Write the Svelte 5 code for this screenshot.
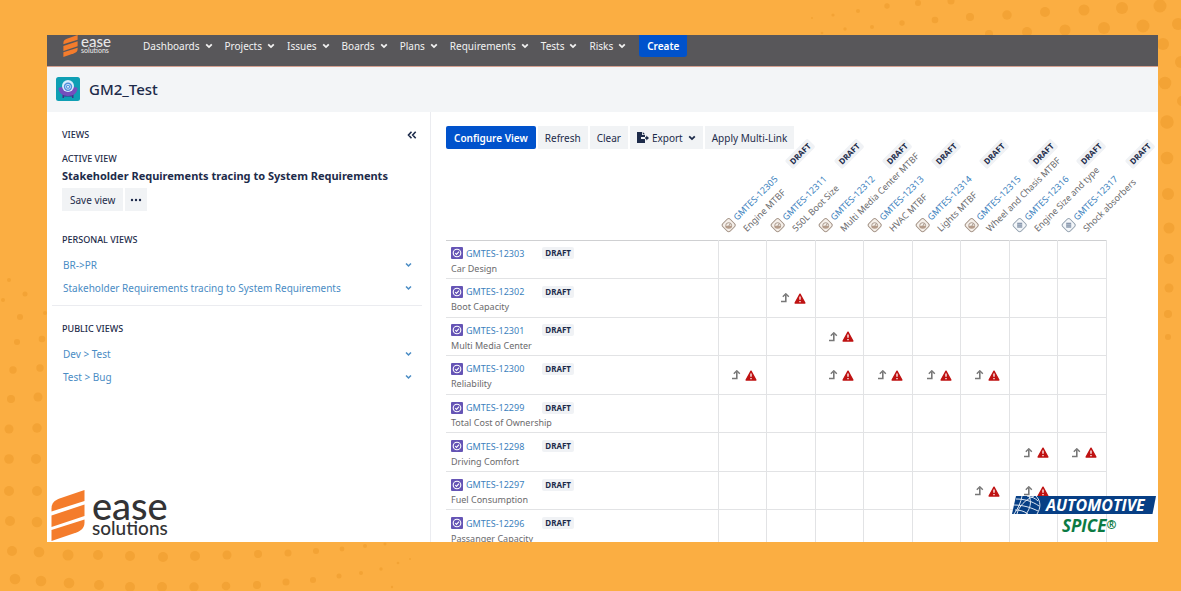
<script lang="ts">
  interface Requirement {
    key: string;
    name: string;
    kind?: 'metric' | 'spec';
    links?: number[];
  }

  const menu = ['Dashboards', 'Projects', 'Issues', 'Boards', 'Plans', 'Requirements', 'Tests', 'Risks'];

  const personalViews = ['BR->PR', 'Stakeholder Requirements tracing to System Requirements'];
  const publicViews = ['Dev > Test', 'Test > Bug'];

  const columns: Requirement[] = [
    { key: 'GMTES-12305', name: 'Engine MTBF', kind: 'metric' },
    { key: 'GMTES-12311', name: '550L Boot Size', kind: 'metric' },
    { key: 'GMTES-12312', name: 'Multi Media Center MTBF', kind: 'metric' },
    { key: 'GMTES-12313', name: 'HVAC MTBF', kind: 'metric' },
    { key: 'GMTES-12314', name: 'Lights MTBF', kind: 'metric' },
    { key: 'GMTES-12315', name: 'Wheel and Chasis MTBF', kind: 'metric' },
    { key: 'GMTES-12316', name: 'Engine Size and type', kind: 'spec' },
    { key: 'GMTES-12317', name: 'Shock absorbers', kind: 'spec' },
  ];

  // links holds the indexes of the linked columns
  const rows: Requirement[] = [
    { key: 'GMTES-12303', name: 'Car Design', links: [] },
    { key: 'GMTES-12302', name: 'Boot Capacity', links: [1] },
    { key: 'GMTES-12301', name: 'Multi Media Center', links: [2] },
    { key: 'GMTES-12300', name: 'Reliability', links: [0, 2, 3, 4, 5] },
    { key: 'GMTES-12299', name: 'Total Cost of Ownership', links: [] },
    { key: 'GMTES-12298', name: 'Driving Comfort', links: [6, 7] },
    { key: 'GMTES-12297', name: 'Fuel Consumption', links: [5, 6] },
    { key: 'GMTES-12296', name: 'Passanger Capacity', links: [] },
  ];

  // halftone dots: x, y, radius
  const topDots = [
    [1160, 6, 6.5], [1122, 8, 6], [1084, 10, 5.5], [1045, 12, 5], [1007, 15, 4.7], [970, 17, 4],
    [935, 20, 3.3], [902, 23, 2.7], [872, 27, 2], [845, 29, 1.7], [822, 33, 1.3], [1178, 24, 6],
    [1143, 26, 6.5], [1104, 28, 6], [1065, 30, 5.5], [1027, 32, 5], [989, 34, 4], [951, 1, 3.5],
    [918, 3, 3], [887, 6, 2.7], [858, 11, 2], [833, 15, 1.6], [812, 18, 1], [1163, 44, 6],
    [1181, 62, 6], [1165, 83, 6.3], [1182, 101, 5], [1167, 122, 6.7], [1167, 158, 6.3],
    [1168, 194, 6], [1169, 228, 5.5], [1169, 259, 5], [1169, 288, 4.5], [1168, 314, 4], [1168, 337, 3],
  ];
  const bottomDots = [
    [9, 280, 2], [25, 294, 2.5], [3, 300, 2], [20, 317, 3], [45, 313, 2], [17, 342, 3],
    [42, 339, 3.3], [13, 370, 3.7], [40, 368, 3.7], [11, 399, 4], [38, 397, 4.5], [9, 429, 4.5],
    [37, 428, 4.7], [9, 459, 4.8], [36, 459, 5], [9, 491, 5], [37, 491, 5], [10, 521, 5],
    [37, 522, 5.3], [12, 551, 5], [39, 552, 5.3], [15, 579, 5.3], [41, 581, 5.3], [68, 555, 5.5],
    [98, 555, 5], [130, 556, 5], [163, 557, 5], [195, 556, 5], [227, 555, 4.5], [258, 554, 4],
    [288, 553, 3.5], [316, 551, 3], [342, 549, 2.4], [365, 546, 2], [385, 544, 1.5], [69, 583, 5.3],
    [99, 585, 5], [130, 587, 5], [162, 587, 5], [194, 587, 4.7], [226, 586, 4.3], [257, 585, 4],
    [286, 582, 3.5], [313, 580, 3], [339, 576, 2.5], [361, 573, 2], [381, 569, 1.7], [398, 563, 1.3],
    [410, 559, 1], [392, 587, 1.2],
  ];
</script>

{#snippet chevron()}
  <svg class="chevron" viewBox="0 0 8 6" aria-hidden="true">
    <path d="M1.2 1.3 4 4.1l2.8-2.8" fill="none" stroke="currentColor" stroke-width="1.8" />
  </svg>
{/snippet}

{#snippet easeLogo()}
  <svg class="mark" viewBox="0 0 33 51" aria-hidden="true">
    <g fill="#f47c2c">
      <path d="M33 0v11L0 21.500v-3C0 13 3 10.500 8 8.500z" />
      <path d="M33 14.500v11.500L0 37V25.500z" />
      <path d="M33 29.500v3c0 5-3 8-8 10L0 51V40z" />
    </g>
  </svg>
  <span class="wordmark">
    <span class="ease">ease</span>
    <span class="solutions">solutions</span>
  </span>
{/snippet}

{#snippet kindIcon(kind: string | undefined)}
  {#if kind === 'metric'}
    <svg class="kind" viewBox="0 0 12 12" aria-hidden="true">
      <rect x=".7" y=".7" width="10.600" height="10.600" rx="2.500" fill="#f6f0ea" stroke="#a8988c" />
      <g transform="rotate(45 6 6)">
        <path d="M2.500 6.500h7a3.500 3 0 0 1-7 0z" fill="#b59c8a" />
        <path d="M3 6.500a3 3 0 0 1 6 0M6 7l1.500-2.500" fill="none" stroke="#a8988c" />
      </g>
    </svg>
  {:else if kind === 'spec'}
    <svg class="kind" viewBox="0 0 12 12" aria-hidden="true">
      <rect x=".7" y=".7" width="10.600" height="10.600" rx="2.500" fill="#f4f7fa" stroke="#9aa7b4" />
      <g transform="rotate(45 6 6)">
        <rect x="3.500" y="3.500" width="5" height="5" fill="#8796ab" />
        <path d="M3.500 5.200h5M3.500 6.900h5" stroke="#c8d1dc" stroke-width=".6" />
      </g>
    </svg>
  {:else}
    <svg class="kind" viewBox="0 0 12 12" aria-hidden="true">
      <rect width="12" height="12" rx="1" fill="#6554b5" />
      <circle cx="6" cy="6" r="3.800" fill="none" stroke="#fff" stroke-width="1.100" />
      <path d="m4.200 6 1.300 1.400L8 4.600" fill="none" stroke="#fff" stroke-width="1.100" />
    </svg>
  {/if}
{/snippet}

{#snippet requirement(item: Requirement)}
  <div class="requirement">
    <div class="key">
      {@render kindIcon(item.kind)}
      <a href="#{item.key}">{item.key}</a>
      <span class="status">DRAFT</span>
    </div>
    <div class="name">{item.name}</div>
  </div>
{/snippet}

{#snippet viewList(views: string[])}
  <ul class="views">
    {#each views as view}
      <li>
        <a href="#view">{view}</a>
        <button class="expand" aria-label="Options for {view}">{@render chevron()}</button>
      </li>
    {/each}
  </ul>
{/snippet}

<div class="page">
  <svg class="dots top" viewBox="781 0 400 350" aria-hidden="true">
    {#each topDots as [cx, cy, r]}
      <circle {cx} {cy} {r} />
    {/each}
  </svg>
  <svg class="dots bottom" viewBox="0 260 420 331" aria-hidden="true">
    {#each bottomDots as [cx, cy, r]}
      <circle {cx} {cy} {r} />
    {/each}
  </svg>

  <div class="app">
    <header class="topbar">
      <a class="logo small" href="#home" aria-label="ease solutions">{@render easeLogo()}</a>
      <nav>
        {#each menu as entry}
          <button class="menu-item">{entry}{@render chevron()}</button>
        {/each}
      </nav>
      <button class="create">Create</button>
    </header>

    <div class="project">
      <svg class="avatar" viewBox="0 0 24 24" aria-hidden="true">
        <rect width="24" height="24" rx="2.500" fill="#0f9fb4" />
        <path d="M6.500 17h11v4H16v-1.500H8V21H6.500z" fill="#41308a" />
        <path d="M2.500 11c1.500-1 3-1 4-1h11c1 0 2.500 0 4 1 0 5-4 8-9.500 8s-9.500-3-9.500-8z" fill="#7550bd" />
        <circle cx="12" cy="9" r="6" fill="#d9ecfc" />
        <circle cx="12" cy="9.800" r="4.200" fill="#4d8fdc" />
        <circle cx="12" cy="9.800" r="2.500" fill="none" stroke="#c3ddf7" />
        <circle cx="12" cy="9.800" r="1" fill="#e6f2fd" />
        <path d="M6 13.500c3 3 9 3 12 0v2c-3 3-9 3-12 0z" fill="#7550bd" />
      </svg>
      <h1>GM2_Test</h1>
    </div>

    <div class="content">
      <aside>
        <div class="aside-head">
          <h2>VIEWS</h2>
          <button class="collapse" aria-label="Collapse sidebar">
            <svg viewBox="0 0 10 8" aria-hidden="true">
              <path d="M4.500.800 1.500 4l3 3.200M8.700.800l-3 3.200 3 3.200" fill="none" stroke="currentColor" stroke-width="1.600" />
            </svg>
          </button>
        </div>
        <h2 class="active-label">ACTIVE VIEW</h2>
        <p class="active-view">Stakeholder Requirements tracing to System Requirements</p>
        <div class="actions">
          <button class="btn">Save view</button>
          <button class="btn more" aria-label="More">
            <svg viewBox="0 0 12 4" aria-hidden="true">
              <circle cx="2" cy="2" r="1.200" /><circle cx="6" cy="2" r="1.200" /><circle cx="10" cy="2" r="1.200" />
            </svg>
          </button>
        </div>
        <section>
          <h2>PERSONAL VIEWS</h2>
          {@render viewList(personalViews)}
        </section>
        <hr />
        <section class="public">
          <h2>PUBLIC VIEWS</h2>
          {@render viewList(publicViews)}
        </section>
      </aside>

      <main>
        <div class="toolbar">
          <button class="btn primary">Configure View</button>
          <button class="btn">Refresh</button>
          <button class="btn">Clear</button>
          <button class="btn export">
            <svg class="export-icon" viewBox="0 0 12 11" aria-hidden="true">
              <path d="M0 0h5v3h3v2H4v2h4v4H0z" fill="currentColor" />
              <path d="M5.800 0 8 2.300H5.800z" fill="currentColor" />
              <path d="M8.300 5h1V3.500L12 6 9.300 8.500V7h-1z" fill="currentColor" />
            </svg>
            Export{@render chevron()}
          </button>
          <button class="btn">Apply Multi-Link</button>
        </div>

        <table>
          <thead>
            <tr>
              <td class="corner"></td>
              {#each columns as column}
                <th scope="col">{@render requirement(column)}</th>
              {/each}
            </tr>
          </thead>
          <tbody>
            {#each rows as row}
              <tr>
                <th scope="row">{@render requirement(row)}</th>
                {#each columns as _, i}
                  <td>
                    {#if row.links?.includes(i)}
                      <div class="link">
                        <svg class="arrow" viewBox="0 0 10 10" aria-hidden="true">
                          <path d="M1 8.500h4.800V2" fill="none" stroke="#777" stroke-width="1.600" />
                          <path d="M2.800 3.800 5.800.800l3 3" fill="none" stroke="#777" stroke-width="1.400" />
                        </svg>
                        <svg class="warning" viewBox="0 0 12 11" aria-hidden="true">
                          <path d="M6 1.200 10.900 10H1.100z" fill="#bf1212" stroke="#bf1212" stroke-width="1.400" stroke-linejoin="round" />
                          <path d="M6 3.500v3.300M6 7.900v1.400" stroke="#fff" stroke-width="1.300" />
                        </svg>
                      </div>
                    {/if}
                  </td>
                {/each}
              </tr>
            {/each}
          </tbody>
        </table>
      </main>
    </div>

    <div class="logo large">{@render easeLogo()}</div>

    <svg class="spice" viewBox="0 0 144 40" role="img" aria-label="Automotive SPICE">
      <path d="M4 0h140l-3.500 18H0z" fill="#073f85" />
      <g fill="none" stroke="#dfe8f3" stroke-width="1">
        <path d="M24 0c5 5 5 12 1 18M17 0c3 6 1 13-3 18M10 0c-1 6-4 13-8 18M4 3c8 0 16 2 23 7M2 9c8 0 16 2 24 6M3 14c5 0 9 1 13 4M15 0c5 1 8 2 11 5M22 0C13 4 7 10 5 18" />
      </g>
      <text class="automotive" x="34" y="15">AUTOMOTIVE</text>
      <text class="spice-text" x="50" y="36">SPICE<tspan class="registered" dy="-3">®</tspan></text>
    </svg>
  </div>
</div>

<style>
  :global(body) {
    margin: 0;
  }

  .page {
    position: relative;
    display: flex;
    height: 100vh;
    box-sizing: border-box;
    padding: 35px 23px 49px 47px;
    overflow: hidden;
    background: #fbae42;
    color: #1d2b4a;
    font: 10px/16px 'Noto Sans', sans-serif;
  }

  .dots {
    position: absolute;
    fill: #f3a335;
  }

  .dots.top {
    top: 0;
    right: 0;
    width: 400px;
  }

  .dots.bottom {
    bottom: 0;
    left: 0;
    width: 420px;
  }

  .app {
    position: relative;
    flex: 1;
    display: flex;
    flex-direction: column;
    min-width: 0;
    overflow: hidden;
    background: #fff;
  }

  button {
    margin: 0;
    padding: 0;
    border: 0;
    background: none;
    color: inherit;
    font: inherit;
    white-space: nowrap;
    cursor: pointer;
  }

  a {
    color: #3b7fbd;
    text-decoration: none;
  }

  .chevron {
    width: 8px;
    height: 6px;
  }

  .topbar {
    display: flex;
    align-items: flex-start;
    flex-shrink: 0;
    height: 31px;
    padding-left: 16px;
    border-bottom: 1px solid #d3a090;
    background: #58575a;
    color: #f2f2f2;
  }

  .logo {
    display: flex;
    color: #333335;
    font-family: Lato, sans-serif;
    font-weight: 500;
  }

  .wordmark {
    display: flex;
    flex-direction: column;
  }

  .logo.small {
    width: 80px;
    gap: 3px;
    color: #e6e6e6;
  }

  .small .mark {
    width: 15px;
    height: 22px;
  }

  .small .ease {
    font-size: 15px;
    line-height: 12px;
  }

  .small .solutions {
    font-size: 7px;
    line-height: 7px;
  }

  nav {
    display: flex;
    gap: 12px;
    padding-top: 3px;
  }

  .menu-item {
    display: flex;
    align-items: center;
    gap: 5px;
  }

  .create {
    height: 22px;
    margin-left: 13px;
    padding: 0 8px;
    border-radius: 0 0 3px 3px;
    background: #0052cc;
    color: #fff;
    font-weight: 600;
  }

  .project {
    display: flex;
    align-items: center;
    flex-shrink: 0;
    gap: 9px;
    box-sizing: border-box;
    height: 45px;
    padding: 0 0 2px 9px;
    background: #f3f5f7;
  }

  .avatar {
    width: 24px;
    height: 24px;
  }

  h1 {
    margin: 0;
    font-size: 15px;
    font-weight: 500;
    line-height: 20px;
  }

  .content {
    flex: 1;
    display: flex;
    min-height: 0;
  }

  aside {
    box-sizing: border-box;
    width: 384px;
    flex-shrink: 0;
    padding: 15px 8px 0 5px;
    border-right: 1px solid #ebecf0;
  }

  h2 {
    margin: 0;
    padding-left: 10px;
    font-size: 9px;
    font-weight: 500;
    line-height: 16px;
  }

  .aside-head {
    display: flex;
    align-items: center;
    justify-content: space-between;
    padding-right: 5px;
  }

  .collapse {
    display: flex;
  }

  .collapse svg {
    width: 10px;
    height: 8px;
  }

  .active-label {
    margin-top: 8px;
  }

  .active-view {
    margin: 1px 0 4px;
    padding-left: 10px;
    font-size: 11px;
    font-weight: 700;
    white-space: nowrap;
  }

  .actions {
    display: flex;
    gap: 2px;
    padding-left: 10px;
  }

  .btn {
    height: 23px;
    padding: 0 7px;
    background: #f1f3f5;
  }

  .actions .btn {
    padding: 0 8px;
  }

  .more svg {
    display: block;
    width: 12px;
    height: 4px;
    margin: 0 -3px;
    fill: currentColor;
  }

  section {
    margin-top: 21px;
  }

  section.public {
    margin-top: 15px;
  }

  .views {
    margin: 5px 0 0;
    padding: 0 10px 0 11px;
    list-style: none;
  }

  .views li {
    display: flex;
    align-items: center;
    justify-content: space-between;
    height: 23px;
  }

  .views a,
  .expand {
    color: #4a8cc4;
  }

  .expand {
    display: flex;
  }

  .expand .chevron {
    width: 7px;
  }

  hr {
    margin: 6px 0 0;
    border: 0;
    border-top: 1px solid #ebecf0;
  }

  main {
    flex: 1;
    min-width: 0;
    padding: 14px 51px 0 15px;
  }

  .toolbar {
    display: flex;
    gap: 2px;
  }

  .btn.primary {
    padding: 0 8px;
    border-radius: 2px;
    background: #0052cc;
    color: #fff;
    font-weight: 600;
  }

  .export {
    display: flex;
    align-items: center;
    gap: 3px;
  }

  .export .chevron {
    margin-left: 2px;
  }

  .export-icon {
    width: 12px;
    height: 11px;
  }

  table {
    width: 100%;
    height: 400px;
    table-layout: fixed;
    border-collapse: collapse;
  }

  thead tr {
    height: 91px;
  }

  .corner {
    width: 272px;
  }

  th,
  td {
    padding: 0;
    font-weight: 400;
    text-align: left;
  }

  tbody th,
  tbody td {
    border: 1px solid #e2e3e5;
  }

  tbody th {
    padding: 3px 0 0 5px;
    border-left: 0;
  }

  tbody tr:first-child > * {
    border-top-color: #cfd0d2;
  }

  thead th {
    position: relative;
  }

  thead .requirement {
    position: absolute;
    bottom: -5px;
    left: 22px;
    transform: rotate(-45deg);
    transform-origin: left bottom;
  }

  thead .name {
    padding-left: 14px;
  }

  .requirement {
    font-size: 9px;
    line-height: 15px;
    white-space: nowrap;
  }

  .key {
    display: flex;
    align-items: center;
  }

  .kind {
    width: 12px;
    height: 12px;
    margin-right: 3px;
  }

  .status {
    margin-left: 18px;
    padding: 0 3px;
    border-radius: 2px;
    background: #f0f2f5;
    font-size: 8px;
    font-weight: 700;
    line-height: 12px;
  }

  .name {
    color: #6b6b6d;
  }

  .link {
    display: flex;
    align-items: center;
    justify-content: center;
    gap: 4px;
    padding: 1px 0 0 4px;
  }

  .arrow {
    width: 10px;
    height: 10px;
  }

  .warning {
    width: 12px;
    height: 11px;
  }

  .logo.large {
    position: absolute;
    bottom: 1px;
    left: 4px;
    gap: 7px;
  }

  .large .mark {
    width: 34px;
    height: 51px;
  }

  .large .ease {
    font-size: 38px;
    line-height: 30px;
  }

  .large .solutions {
    font-size: 19px;
    line-height: 16px;
  }

  .spice {
    position: absolute;
    right: 2px;
    bottom: 6px;
    width: 144px;
    height: 40px;
    overflow: visible;
    font-family: 'Open Sans', sans-serif;
    font-style: italic;
    font-weight: 700;
  }

  .automotive {
    fill: #fff;
    font-size: 16px;
  }

  .spice-text {
    fill: #0c7a43;
    font-size: 17px;
  }

  .registered {
    font-size: 12px;
  }
</style>
